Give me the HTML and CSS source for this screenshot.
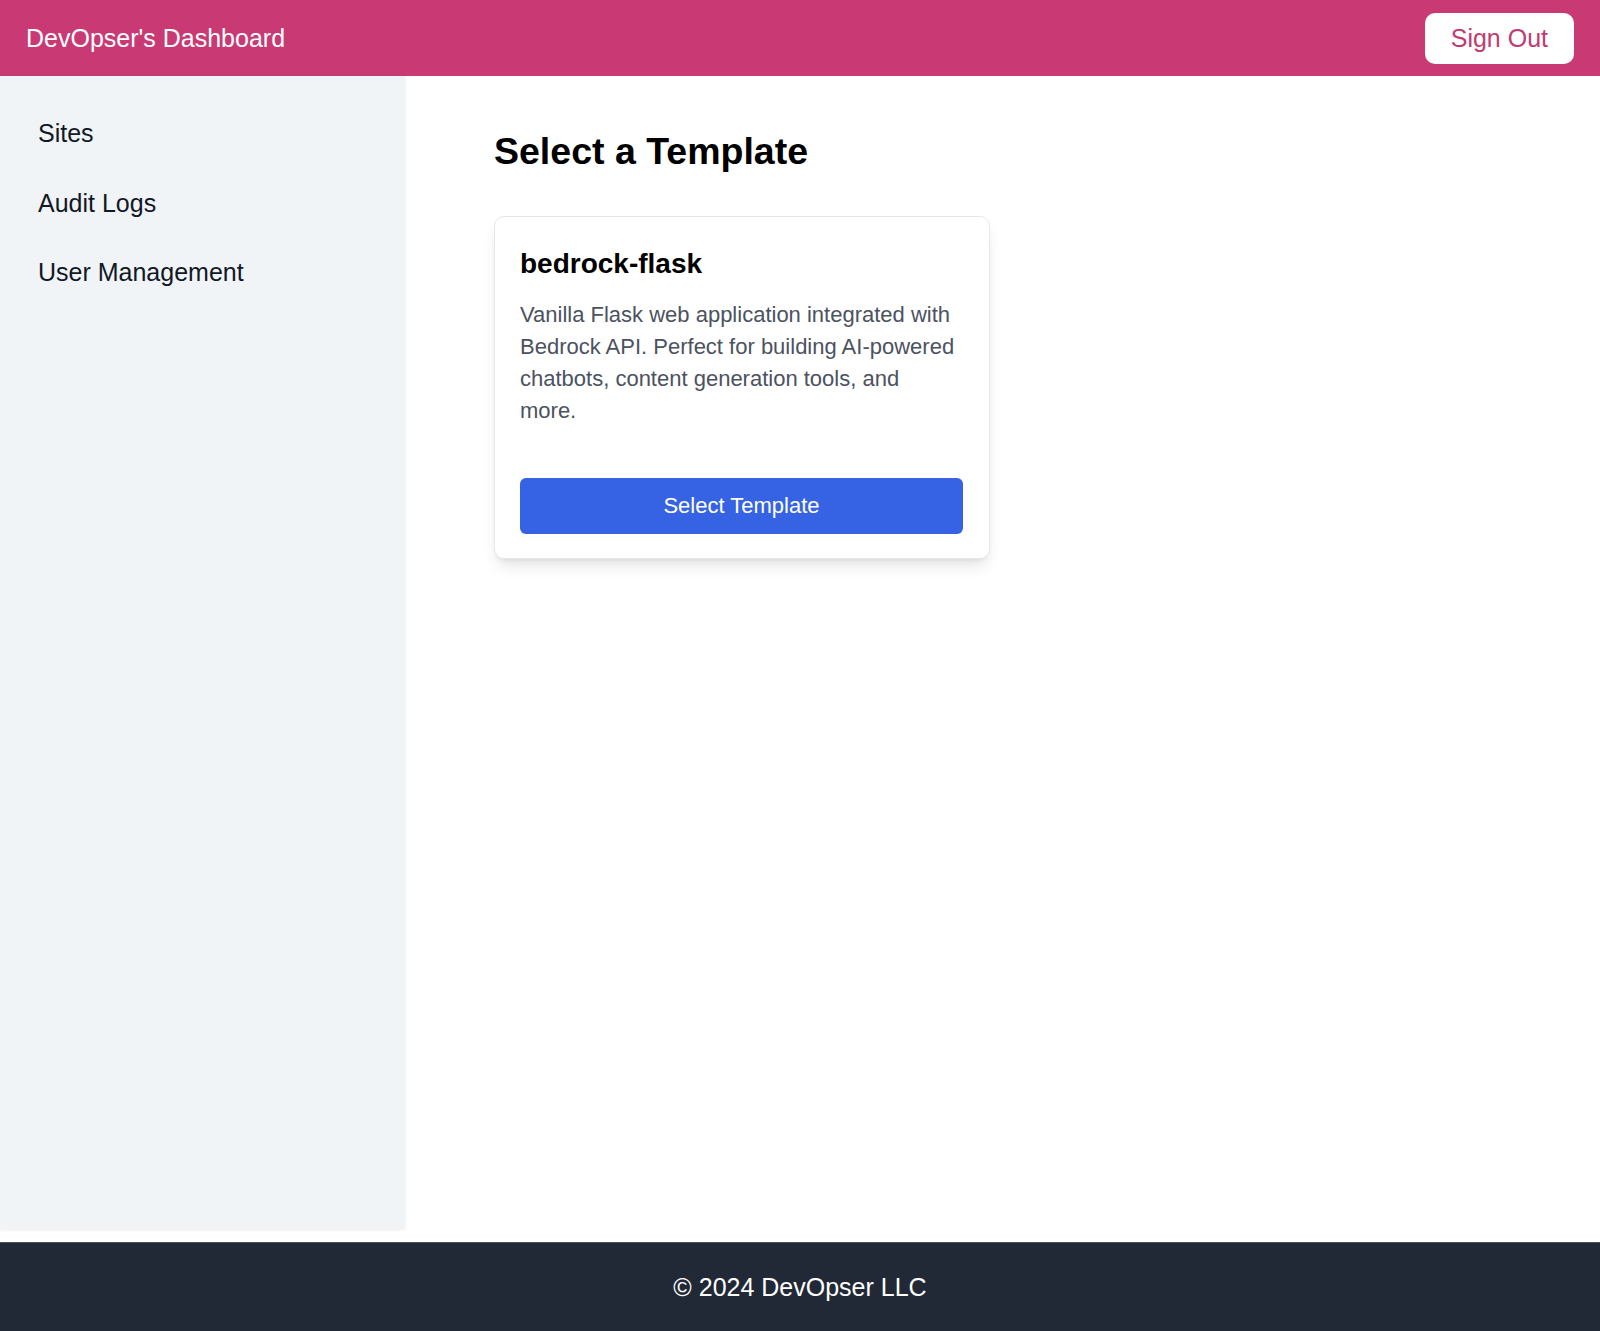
FILE: index.html
```
<!DOCTYPE html>
<html lang="en">
<head>
  <meta charset="UTF-8" />
  <meta name="viewport" content="width=device-width, initial-scale=1.0"/>
  <title>DevOpser's Dashboard</title>
  <link rel="stylesheet" href="styles.css">
</head>
<body>
  <!-- top bar -->
  <header class="topbar">
    <h1 class="brand">DevOpser's Dashboard</h1>
    <button class="signout">Sign Out</button>
  </header>

  <div class="layout">
    <!-- side navigation -->
    <nav class="sidebar">
      <a href="#" class="nav-link">Sites</a>
      <a href="#" class="nav-link">Audit Logs</a>
      <a href="#" class="nav-link">User Management</a>
    </nav>

    <main class="content">
      <h2 class="page-title">Select a Template</h2>

      <div class="card">
        <h3 class="card-title">bedrock-flask</h3>
        <p class="card-desc">Vanilla Flask web application integrated with Bedrock API. Perfect for building AI-powered chatbots, content generation tools, and more.</p>
        <button class="select-btn">Select Template</button>
      </div>
    </main>
  </div>

  <footer class="footer">© 2024 DevOpser LLC</footer>
</body>
</html>
```
FILE: styles.css
```
* {
  box-sizing: border-box;
}
body {
  margin: 0;
  min-height: 100vh;
  display: flex;
  flex-direction: column;
  font-family: "Liberation Sans", Arial, Helvetica, sans-serif;
  color: #111827;
  background: #fff;
}
.topbar {
  height: 76px;
  flex-shrink: 0;
  background-color: #c93a75;
  display: flex;
  align-items: center;
  justify-content: space-between;
  padding: 0 26px;
}
.brand {
  margin: 0;
  font-size: 25px;
  font-weight: normal;
  color: #fff;
}
.signout {
  font-family: inherit;
  font-size: 25px;
  line-height: 27px;
  padding: 12px 26px;
  color: #c23a72;
  background: #fff;
  border: none;
  border-radius: 10px;
}
.layout {
  flex: 1;
  display: flex;
}
.sidebar {
  width: 405px;
  flex-shrink: 0;
  background-color: #f1f4f6;
  padding: 39px 38px 0;
  display: flex;
  flex-direction: column;
  gap: 32px;
  box-shadow: 0 1px 3px rgba(0, 0, 0, 0.08);
}
.nav-link {
  font-size: 25px;
  line-height: 37.5px;
  color: #111827;
  text-decoration: none;
}
.content {
  flex: 1;
  padding: 53px 89px 0;
}
.page-title {
  margin: 0 0 42px;
  font-size: 37.5px;
  line-height: 45px;
  font-weight: bold;
  color: #000;
}
.card {
  width: 496px;
  padding: 26px 26px 24px 25px;
  border: 1px solid #e5e7eb;
  border-radius: 10px;
  background: #fff;
  box-shadow: 0 10px 15px -3px rgba(0, 0, 0, 0.1), 0 4px 6px -4px rgba(0, 0, 0, 0.1);
}
.card-title {
  margin: 0 0 14px;
  font-size: 28px;
  line-height: 42px;
  font-weight: bold;
  color: #000;
}
.card-desc {
  margin: 0 0 51px;
  padding-right: 5px;
  font-size: 22px;
  line-height: 32px;
  color: #4b5260;
}
.select-btn {
  display: block;
  width: 100%;
  height: 56px;
  font-family: inherit;
  font-size: 22px;
  color: #fff;
  background-color: #3563e3;
  border: none;
  border-radius: 6px;
}
.footer {
  margin-top: 13px;
  height: 89px;
  flex-shrink: 0;
  background-color: #222936;
  border-top: 1px solid #4a515c;
  color: #fff;
  font-size: 25px;
  display: flex;
  align-items: center;
  justify-content: center;
}
```
